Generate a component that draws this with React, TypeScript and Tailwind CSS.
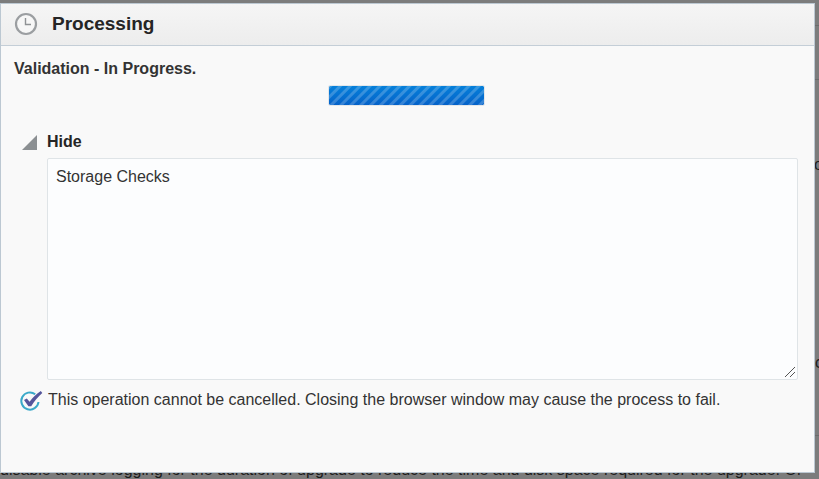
import { useState } from 'react';

function ClockIcon() {
    return (
        <svg width="24" height="24" viewBox="0 0 24 24" fill="none" aria-hidden="true">
            <circle cx="12" cy="12" r="10" fill="#f7f7f7" stroke="#9b9ea1" strokeWidth="2.2" />
            <path d="M11.5 6v6.5H17" stroke="#8f9295" strokeWidth="1.4" />
        </svg>
    );
}

function CheckIcon() {
    return (
        <svg width="24" height="24" viewBox="0 0 24 24" fill="none" className="mt-1" aria-hidden="true">
            <path d="M16.2 4.2A8.6 8.6 0 1 0 19.5 12" stroke="#3aa9c9" strokeWidth="2" />
            <path
                d="M5 10l2.8-1.6 2.8 3.4C14 7.4 17.5 3.6 21.8 1l1.5 2C19 7 15 11.4 12.2 16.2H9.4z"
                fill="#55559b"
            />
        </svg>
    );
}

function ProgressBar() {
    return (
        <div
            role="progressbar"
            aria-label="Validation"
            className="h-[21px] w-[157px] rounded-xs border border-[#e3e7ea] bg-[repeating-linear-gradient(135deg,rgba(255,255,255,0.2)_0px,rgba(255,255,255,0.2)_2px,transparent_3px,transparent_6px,rgba(255,255,255,0.2)_7px),linear-gradient(#0580da,#0562c9)] bg-clip-padding"
        />
    );
}

function PageBehind() {
    return (
        <div className="absolute inset-0 overflow-hidden bg-[#7c7c7c] text-base text-[#1c1c1c]" aria-hidden="true">
            <div className="h-[26px] border-b border-[#6b6b6b]" />
            <div className="h-[54px] border-b border-[#6b6b6b]" />
            <div className="flex h-[198px] items-center justify-end pb-7">
                <span className="-mr-1">o</span>
            </div>
            <div className="flex h-[158px] items-center justify-end border-b border-[#6b6b6b] pt-3">
                <span className="-mr-1">c</span>
            </div>
            <p className="mt-[22px] whitespace-nowrap">
                disable archive logging for the duration of upgrade to reduce the time and disk space required for the upgrade. Or
            </p>
        </div>
    );
}

export default function App() {
    const [open, setOpen] = useState(true);

    return (
        <div className="relative min-h-screen overflow-hidden font-['Liberation_Sans',Arial,sans-serif]">
            <PageBehind />

            <div
                role="dialog"
                aria-labelledby="dialog-title"
                className="relative mt-[3px] mr-1 mb-1.5 min-h-[470px] border border-[#bcc8d2] bg-[#f9f9f9] text-[#333333]"
            >
                <header className="flex h-[42px] items-center gap-[14px] border-b border-[#c4ced7] bg-linear-to-b from-[#f5f5f5] to-[#ededed] px-[13px] pb-0.5">
                    <ClockIcon />
                    <h1 id="dialog-title" className="text-[19px] leading-6 font-bold text-[#252525]">
                        Processing
                    </h1>
                </header>

                <main className="px-[13px]">
                    <h2 className="pt-[11px] text-base font-bold">Validation - In Progress.</h2>
                    <div className="flex justify-center pt-1 pr-0.5">
                        <ProgressBar />
                    </div>

                    <div className="pt-6 pr-[3px] pl-2">
                        <button
                            type="button"
                            aria-expanded={open}
                            aria-controls="log"
                            onClick={() => setOpen(!open)}
                            className="flex items-center gap-2.5 text-base font-bold text-[#252525]"
                        >
                            <svg width="15" height="15" viewBox="0 0 15 15" aria-hidden="true">
                                <path d="M15 0v15H0z" fill="#8b8f92" />
                            </svg>
                            {open ? 'Hide' : 'Show'}
                        </button>
                        {open && (
                            <div className="relative mt-1 ml-[25px]">
                                <textarea
                                    id="log"
                                    aria-label="Progress log"
                                    readOnly
                                    defaultValue="Storage Checks"
                                    className="block h-[222px] w-full resize-y rounded-xs border border-[#dfe4e7] bg-[#fcfdfe] px-2 py-1.5 text-base outline-none [&::-webkit-resizer]:hidden"
                                />
                                <svg
                                    width="12"
                                    height="12"
                                    viewBox="0 0 12 12"
                                    className="pointer-events-none absolute right-0.5 bottom-0.5"
                                    aria-hidden="true"
                                >
                                    <path d="M1 11L11 1M6 11l5-5" stroke="#555555" strokeWidth="1" />
                                </svg>
                            </div>
                        )}
                    </div>

                    <p className="flex items-center gap-[5px] pt-1.5 pl-[5px] text-base">
                        <CheckIcon />
                        This operation cannot be cancelled. Closing the browser window may cause the process to fail.
                    </p>
                </main>
            </div>
        </div>
    );
}
